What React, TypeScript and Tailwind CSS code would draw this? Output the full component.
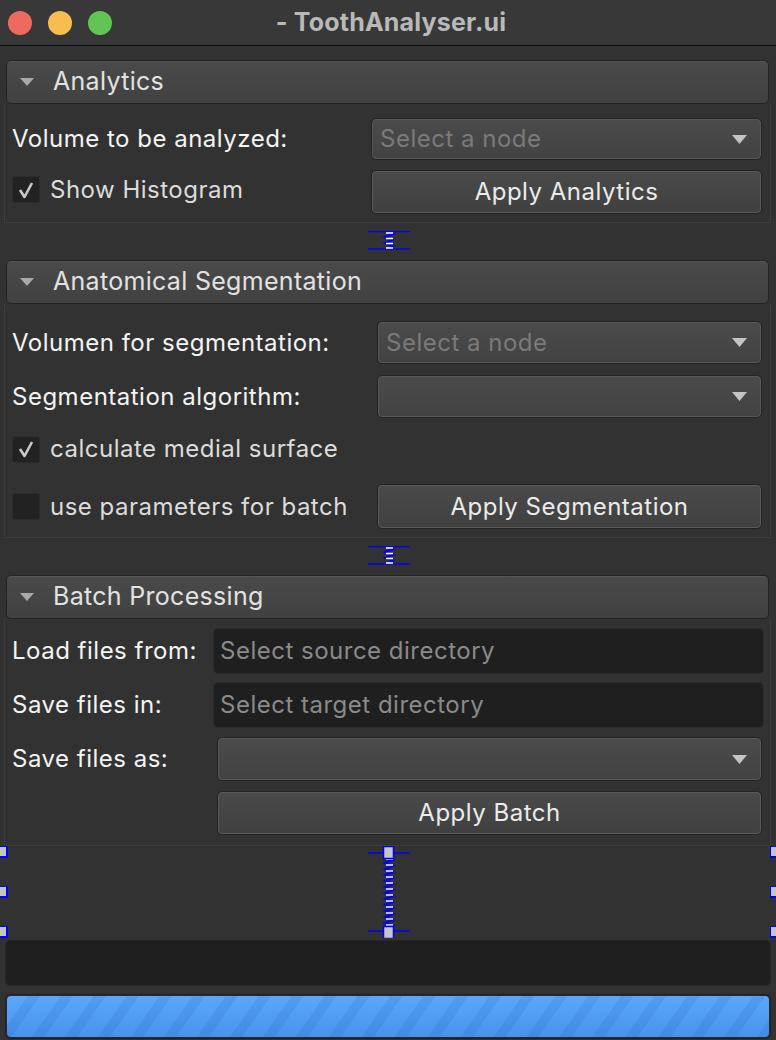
import React from "react";

const sans = "font-['Inter','Liberation_Sans',sans-serif]";
const txt = "text-[24px] tracking-[0.5px]";

function Caret({ className = "" }: { className?: string }) {
  return (
    <svg width="15" height="9" viewBox="0 0 15 9" className={className}>
      <path d="M0 0 L15 0 L7.5 9 Z" fill="#c4c4c4" />
    </svg>
  );
}

function SectionHeader({ title }: { title: string }) {
  return (
    <div className="h-[44px] mx-[2px] flex items-center rounded-[5px] border border-[#232323] bg-gradient-to-b from-[#4a4a4a] to-[#414141] shadow-[inset_0_1px_0_#555]">
      <svg width="14" height="8" viewBox="0 0 14 8" className="ml-[13px] mr-[19px]">
        <path d="M0 0 L14 0 L7 8 Z" fill="#a9a9a9" />
      </svg>
      <span className="text-[25px] tracking-[0.3px] text-[#e2e2e2]">{title}</span>
    </div>
  );
}

function Combo({ text, h = "h-[43px]" }: { text?: string; h?: string }) {
  return (
    <div
      className={`${h} flex items-center justify-between rounded-[5px] border border-[#232323] bg-gradient-to-b from-[#4b4b4b] to-[#424242] shadow-[inset_0_0_0_1px_#575757] pl-[8px] pr-[14px]`}
    >
      <span className={`${txt} text-[#7a7a7a]`}>{text ?? ""}</span>
      <Caret />
    </div>
  );
}

function Button({ label, h = "h-[44px]" }: { label: string; h?: string }) {
  return (
    <div
      className={`${h} flex items-center justify-center rounded-[5px] border border-[#232323] bg-gradient-to-b from-[#4a4a4a] to-[#404040] shadow-[inset_0_0_0_1px_#5a5a5a] ${txt} text-[#ebebeb]`}
    >
      {label}
    </div>
  );
}

function LineEdit({ placeholder }: { placeholder: string }) {
  return (
    <div className={`h-[46px] -mx-[2px] flex items-center rounded-[5px] bg-[#1f1f1f] border border-[#2a2a2a] pl-[6px] ${txt} text-[#8a8a8a]`}>
      {placeholder}
    </div>
  );
}

function CheckBox({ checked, label }: { checked: boolean; label: string }) {
  return (
    <div className="flex items-center">
      <div className="w-[28px] h-[27px] rounded-[3px] bg-[#222] border border-[#2b2b2b] flex items-center justify-center">
        {checked && (
          <svg width="18" height="18" viewBox="0 0 18 18">
            <path d="M3 9 L7.5 16 L15 2" stroke="#c9c9c9" strokeWidth="2.6" fill="none" strokeLinejoin="round" />
          </svg>
        )}
      </div>
      <span className={`ml-[10px] ${txt} text-[#dcdcdc]`}>{label}</span>
    </div>
  );
}

function SmallSpring() {
  return (
    <svg width="42" height="19" viewBox="0 0 42 19">
      <line x1="0" y1="0.5" x2="42" y2="0.5" stroke="#0000ff" strokeWidth="1.5" />
      <line x1="0" y1="18" x2="42" y2="18" stroke="#0000ff" strokeWidth="1.5" />
      <path d="M21 1 L25 3 L17 6 L25 9 L17 12 L25 15 L21 18" stroke="#0000ff" strokeWidth="2" fill="none" />
      <path d="M18 2h7 M18 7.5h7 M18 12.5h7 M18 17h7" stroke="#ffffff" strokeWidth="1.4" />
    </svg>
  );
}

function BigSpring() {
  const coils = Array.from({ length: 12 }, (_, i) => i);
  return (
    <svg width="42" height="92" viewBox="0 0 42 92">
      <line x1="0" y1="7" x2="42" y2="7" stroke="#0000ff" strokeWidth="1.5" />
      <line x1="0" y1="85" x2="42" y2="85" stroke="#0000ff" strokeWidth="1.5" />
      <path
        d={"M21 12 " + coils.map((i) => `L25 ${14 + i * 6} L17 ${17 + i * 6}`).join(" ") + " L21 80"}
        stroke="#0000ff"
        strokeWidth="2"
        fill="none"
      />
      {coils.map((i) => (
        <line key={i} x1="18" y1={13 + i * 6} x2="25" y2={13 + i * 6} stroke="#ffffff" strokeWidth="1.4" />
      ))}
      <rect x="15.5" y="0.5" width="10" height="12" fill="#c6c6c6" stroke="#0000ff" strokeWidth="1.5" />
      <rect x="15.5" y="80.5" width="10" height="12" fill="#c6c6c6" stroke="#0000ff" strokeWidth="1.5" />
    </svg>
  );
}

function Handle({ className }: { className: string }) {
  return <div className={`absolute w-[11px] h-[12px] bg-[#c6c6c6] border-r-2 border-b-2 border-l border-t border-[#0000ff] ${className}`} />;
}

export default function App() {
  return (
    <div className={`w-[776px] h-[1040px] bg-[#323232] flex flex-col overflow-hidden ${sans}`}>
      {/* TITLE BAR */}
      <div className="relative h-[46px] flex items-center bg-[#383838] border-b border-[#0d0d0d]">
        <div className="flex items-center gap-[16px] pl-[8px]">
          <div className="w-[24px] h-[24px] rounded-full bg-[#ee6a5f]" />
          <div className="w-[24px] h-[24px] rounded-full bg-[#f5be4f]" />
          <div className="w-[24px] h-[24px] rounded-full bg-[#61c554]" />
        </div>
        <div className="absolute inset-0 flex items-center justify-center pl-[6px] text-[25px] font-bold tracking-[0.2px] text-[#b9b9b9]">
          - ToothAnalyser.ui
        </div>
      </div>

      <div className="flex flex-col px-[4px] pr-[5px] pt-[14px]">
        {/* ANALYTICS */}
        <SectionHeader title="Analytics" />
        <div className="border-l border-r border-b border-dotted border-[#474747] pl-[7px] pr-[8px] pt-[14px] pb-[8px]">
          <div className="grid grid-cols-[359px_1fr] items-center h-[42px]">
            <span className={`${txt} text-[#f4f4f4]`}>Volume to be analyzed:</span>
            <Combo text="Select a node" h="h-[42px]" />
          </div>
          <div className="grid grid-cols-[359px_1fr] items-center mt-[10px]">
            <div className="-mt-[5px]">
              <CheckBox checked label="Show Histogram" />
            </div>
            <Button label="Apply Analytics" />
          </div>
        </div>
        <div className="flex justify-center h-[37px] pt-[8px] pl-[2px]">
          <SmallSpring />
        </div>

        {/* ANATOMICAL SEGMENTATION */}
        <SectionHeader title="Anatomical Segmentation" />
        <div className="border-l border-r border-b border-dotted border-[#474747] pl-[7px] pr-[8px] pt-[17px] pb-[8px]">
          <div className="grid grid-cols-[365px_1fr] items-center">
            <span className={`${txt} text-[#f4f4f4]`}>Volumen for segmentation:</span>
            <Combo text="Select a node" />
          </div>
          <div className="grid grid-cols-[365px_1fr] items-center mt-[11px]">
            <span className={`${txt} text-[#f4f4f4]`}>Segmentation algorithm:</span>
            <Combo />
          </div>
          <div className="h-[40px] flex items-center mt-[11px]">
            <CheckBox checked label="calculate medial surface" />
          </div>
          <div className="grid grid-cols-[365px_1fr] items-center mt-[15px]">
            <CheckBox checked={false} label="use parameters for batch" />
            <Button label="Apply Segmentation" h="h-[45px]" />
          </div>
        </div>
        <div className="flex justify-center h-[37px] pt-[8px] pl-[2px]">
          <SmallSpring />
        </div>

        {/* BATCH PROCESSING */}
        <SectionHeader title="Batch Processing" />
        <div className="border-l border-r border-b border-dotted border-[#474747] pl-[7px] pr-[8px] pt-[9px] pb-[10px]">
          <div className="grid grid-cols-[203px_1fr] items-center">
            <span className={`${txt} text-[#f4f4f4]`}>Load files from:</span>
            <LineEdit placeholder="Select source directory" />
          </div>
          <div className="grid grid-cols-[203px_1fr] items-center mt-[8px]">
            <span className={`${txt} text-[#f4f4f4]`}>Save files in:</span>
            <LineEdit placeholder="Select target directory" />
          </div>
          <div className="grid grid-cols-[205px_1fr] items-center mt-[9px]">
            <span className={`${txt} text-[#f4f4f4]`}>Save files as:</span>
            <Combo h="h-[44px]" />
          </div>
          <div className="grid grid-cols-[205px_1fr] items-center mt-[10px]">
            <span />
            <Button label="Apply Batch" />
          </div>
        </div>
      </div>

      {/* VERTICAL SPACER WITH SELECTION HANDLES */}
      <div className="relative h-[92px] flex justify-center">
        <Handle className="-left-[3px] top-[0px]" />
        <Handle className="-left-[3px] top-[40px]" />
        <Handle className="-left-[3px] top-[80px]" />
        <Handle className="left-[770px] top-[0px]" />
        <Handle className="left-[770px] top-[40px]" />
        <Handle className="left-[770px] top-[80px]" />
        <div className="pl-[2px]">
          <BigSpring />
        </div>
      </div>

      {/* LOG PANEL */}
      <div className="mx-[5px] mt-[2px] h-[46px] rounded-[5px] bg-[#1f1f1f] border border-[#262626]" />

      {/* PROGRESS BAR */}
      <div className="mx-[5px] mt-[8px] h-[45px] rounded-[5px] border border-[#232323] p-[1px] bg-[#2a2a2a]">
        <div className="h-full rounded-[4px] bg-gradient-to-b from-[#5aa8fc] to-[#4892ec] overflow-hidden">
          <div className="h-full w-full bg-[repeating-linear-gradient(125deg,transparent_0px,transparent_17px,rgba(30,90,180,0.14)_17px,rgba(30,90,180,0.14)_27px)]" />
        </div>
      </div>
    </div>
  );
}
